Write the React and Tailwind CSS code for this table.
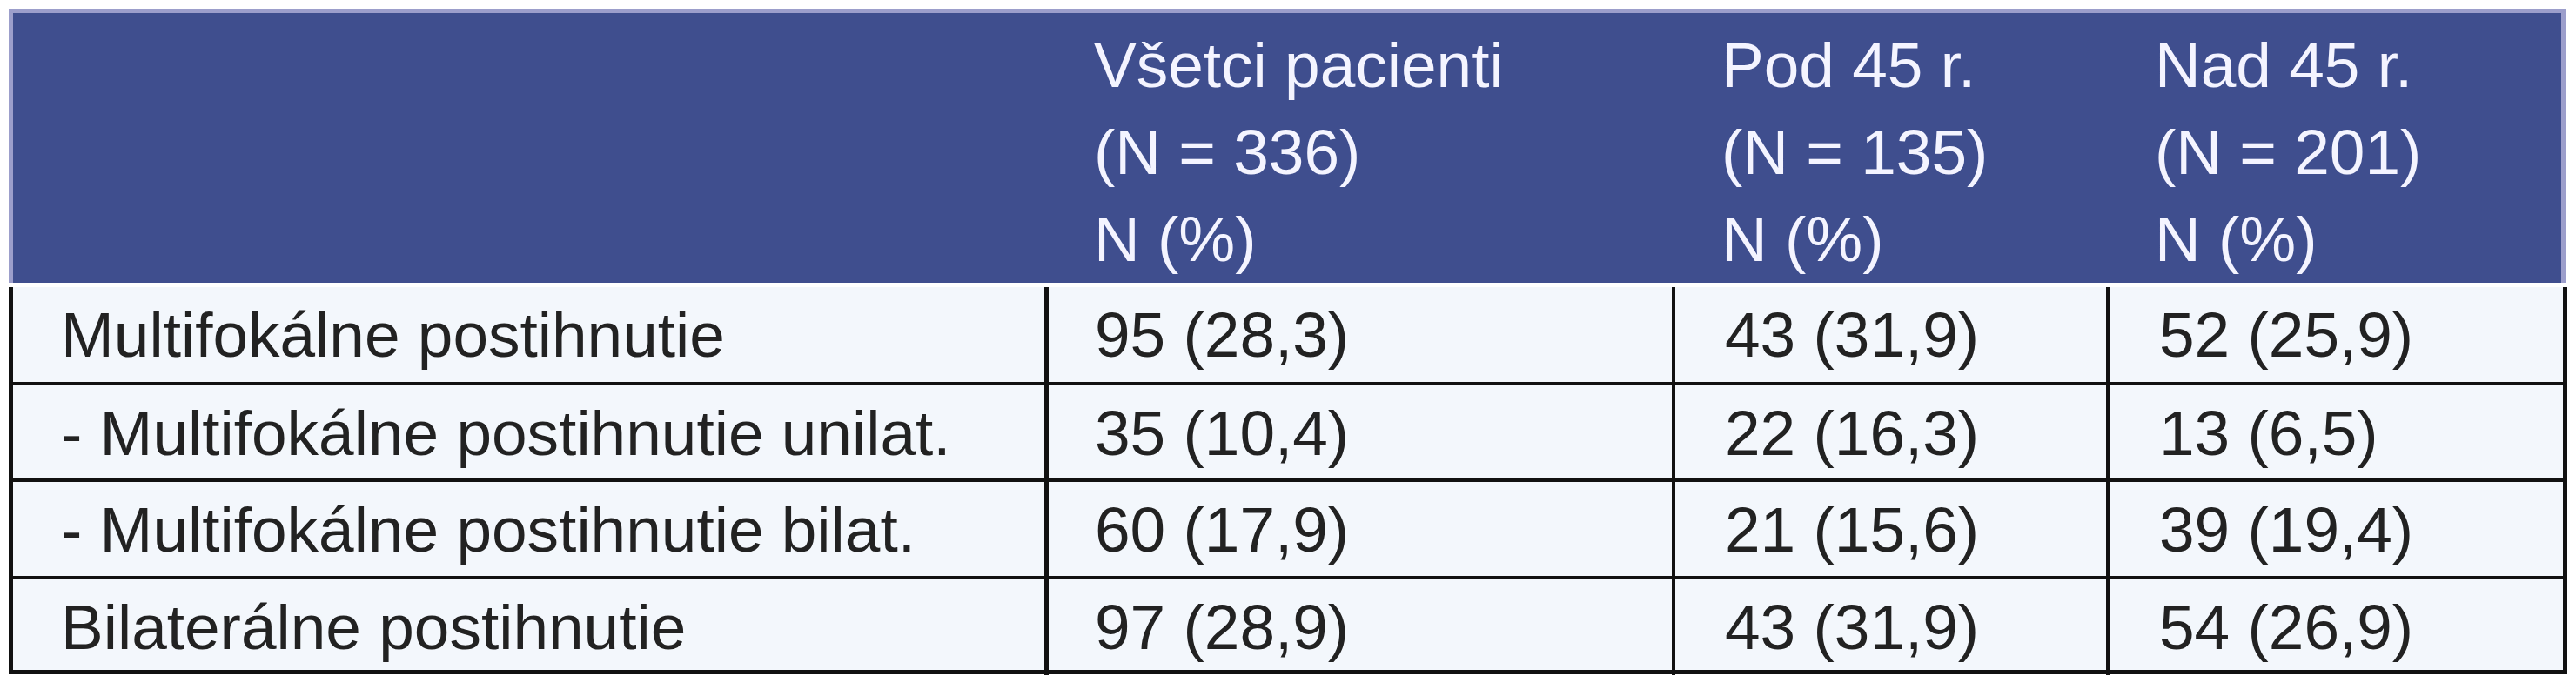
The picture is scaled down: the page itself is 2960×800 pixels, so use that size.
export default function App() {
  const font = { fontFamily: '"Liberation Sans", Arial, sans-serif' };
  const rows = [
    ["Multifokálne postihnutie", "95 (28,3)", "43 (31,9)", "52 (25,9)", "h-[109px]"],
    ["- Multifokálne postihnutie unilat.", "35 (10,4)", "22 (16,3)", "13 (6,5)", "h-[111px]"],
    ["- Multifokálne postihnutie bilat.", "60 (17,9)", "21 (15,6)", "39 (19,4)", "h-[112px]"],
    ["Bilaterálne postihnutie", "97 (28,9)", "43 (31,9)", "54 (26,9)", "h-[108px]"],
  ];
  return (
    <div className="w-[2960px] h-[800px] bg-white pt-[10px] pl-[10px]" style={font}>
      <div className="w-[2938px] h-[315px] bg-[#3f4e8e] border-t-[5px] border-l-[5px] border-r-[5px] border-[#9c9ecb] grid grid-cols-[1185px_721px_499px_525px] text-[73px] leading-[100px] text-[#f4f4ff] pt-[10px]">
        <div></div>
        <div className="pl-[57px]">
          <div>Všetci pacienti</div>
          <div>(N = 336)</div>
          <div>N (%)</div>
        </div>
        <div className="pl-[57px]">
          <div>Pod 45 r.</div>
          <div>(N = 135)</div>
          <div>N (%)</div>
        </div>
        <div className="pl-[56px]">
          <div>Nad 45 r.</div>
          <div>(N = 201)</div>
          <div>N (%)</div>
        </div>
      </div>
      <div className="mt-[5px] w-[2940px] bg-[#f3f7fc] border-l-[5px] border-r-[5px] border-b-[5px] border-[#111111] text-[73px] text-[#222222]">
        {rows.map((r, i) => (
          <div
            key={i}
            className={`grid grid-cols-[1185px_721px_499px_525px] ${r[4]} ${i > 0 ? "border-t-[4px] border-[#111111]" : ""}`}
          >
            <div className="flex items-center pl-[55px] whitespace-nowrap">{r[0]}</div>
            <div className="flex items-center pl-[53px] border-l-[5px] border-[#111111] whitespace-nowrap">{r[1]}</div>
            <div className="flex items-center pl-[57px] border-l-[4px] border-[#111111] whitespace-nowrap">{r[2]}</div>
            <div className="flex items-center pl-[56px] border-l-[5px] border-[#111111] whitespace-nowrap">{r[3]}</div>
          </div>
        ))}
      </div>
    </div>
  );
}
